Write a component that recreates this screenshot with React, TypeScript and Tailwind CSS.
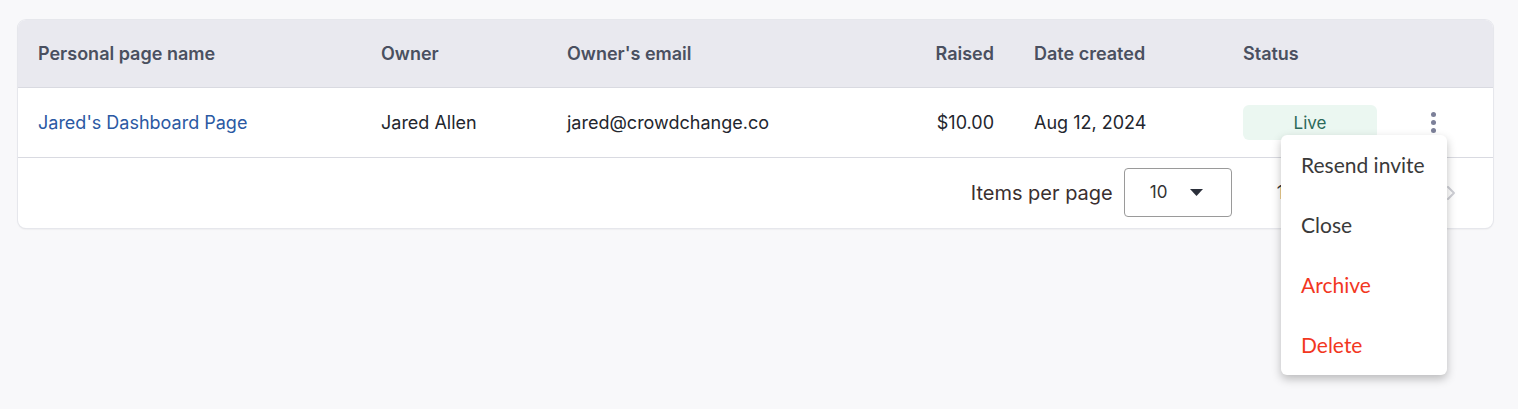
import { ChevronLeft, ChevronRight } from 'lucide-react';

interface PageRow {
  name: string;
  owner: string;
  email: string;
  raised: string;
  created: string;
  status: string;
}

const rows: PageRow[] = [
  {
    name: "Jared's Dashboard Page",
    owner: 'Jared Allen',
    email: 'jared@crowdchange.co',
    raised: '$10.00',
    created: 'Aug 12, 2024',
    status: 'Live',
  },
];

const menuItems = [
  { label: 'Resend invite', danger: false },
  { label: 'Close', danger: false },
  { label: 'Archive', danger: true },
  { label: 'Delete', danger: true },
];

function Kebab() {
  return (
    <button className="flex h-8 w-8 flex-col items-center justify-center gap-[3px]">
      <span className="h-[5px] w-[5px] rounded-full bg-[#7c8099]" />
      <span className="h-[5px] w-[5px] rounded-full bg-[#7c8099]" />
      <span className="h-[5px] w-[5px] rounded-full bg-[#7c8099]" />
    </button>
  );
}

export default function App() {
  return (
    <div className="min-h-screen bg-[#f8f8fa] pl-[18px] pr-[25px] pt-5 font-['Inter',sans-serif]">
      <div className="relative">
        <div className="overflow-hidden rounded-lg bg-white shadow-[0_1px_2px_rgba(0,0,0,0.12)] ring-1 ring-[#e6e7ec]">
          <table className="w-full table-fixed border-collapse text-left">
            <colgroup>
              <col className="w-[343px]" />
              <col className="w-[186px]" />
              <col className="w-[326px]" />
              <col className="w-[141px]" />
              <col className="w-[209px]" />
              <col className="w-[174px]" />
              <col />
            </colgroup>
            <thead>
              <tr className="h-[67px] bg-[#e9e9ef] text-[18px] font-semibold text-[#4a5060]">
                <th className="px-5 font-semibold">Personal page name</th>
                <th className="px-5 font-semibold">Owner</th>
                <th className="px-5 font-semibold">Owner's email</th>
                <th className="px-5 text-right font-semibold">Raised</th>
                <th className="px-5 font-semibold">Date created</th>
                <th className="px-5 font-semibold">Status</th>
                <th className="px-5" />
              </tr>
            </thead>
            <tbody>
              {rows.map((row) => (
                <tr
                  key={row.name}
                  className="h-[70px] border-y border-[#d9dae1] text-[18px] text-[#23262e]"
                >
                  <td className="px-5 text-[#2b59a3]">{row.name}</td>
                  <td className="px-5">{row.owner}</td>
                  <td className="px-5">{row.email}</td>
                  <td className="px-5 text-right">{row.raised}</td>
                  <td className="px-5">{row.created}</td>
                  <td className="px-5">
                    <span className="flex h-[35px] w-[134px] items-center justify-center rounded-md bg-[#ebf7f1] pt-[3px] text-[17px] text-[#2b6a5a]">
                      {row.status}
                    </span>
                  </td>
                  <td className="px-5">
                    <Kebab />
                  </td>
                </tr>
              ))}
            </tbody>
          </table>
          <div className="flex h-[70px] items-center justify-end pr-[30px]">
            <span className="text-[20px] text-[#3b2f2f]">Items per page</span>
            <div className="ml-[11px] flex h-[49px] w-[108px] items-center rounded border border-[#9a9a9a] pl-[25px] pr-[28px]">
              <span className="text-[17px] text-[#333]">10</span>
              <svg className="ml-auto" width="13" height="8" viewBox="0 0 13 8">
                <path d="M0 0h13L6.5 7z" fill="#2b2f3a" />
              </svg>
            </div>
            <span className="ml-[45px] text-[18px] text-[#333]">1 of 1</span>
            <ChevronLeft className="ml-[36px] h-6 w-6 text-[#cfd0d6]" strokeWidth={2} />
            <ChevronRight className="ml-[60px] h-6 w-6 text-[#cfd0d6]" strokeWidth={2} />
          </div>
        </div>

        <div className="absolute left-[1263px] top-[115px] w-[166px] rounded-md bg-white shadow-[0_4px_10px_rgba(0,0,0,0.25)] font-['Lato',sans-serif]">
          {menuItems.map((item) => (
            <button
              key={item.label}
              className={`flex h-[60px] w-full items-center px-5 text-left text-[21px] ${
                item.danger ? 'text-[#f2371f]' : 'text-[#3a3a3a]'
              }`}
            >
              {item.label}
            </button>
          ))}
        </div>
      </div>
    </div>
  );
}
